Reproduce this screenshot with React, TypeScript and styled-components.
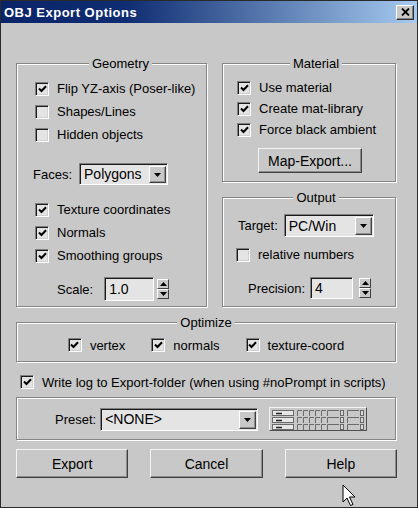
import React from 'react';
import styled, { createGlobalStyle } from 'styled-components';

const FACE = '#c8c8c8';
const FIELD = '#e4e4e4';

const GlobalStyle = createGlobalStyle`
  html, body {
    margin: 0;
    padding: 0;
    background: ${FACE};
  }
  body {
    font-family: 'Liberation Sans', Arial, sans-serif;
    font-size: 13px;
    color: #000;
  }
  * {
    box-sizing: border-box;
  }
`;

const Window = styled.div`
  position: relative;
  width: 418px;
  height: 508px;
  background: ${FACE};
  border: 1px solid #2a2a2a;
  overflow: hidden;
`;

const TitleBar = styled.div`
  height: 22px;
  display: flex;
  align-items: center;
  justify-content: space-between;
  padding: 0 3px 0 3px;
  background: linear-gradient(90deg, #0a246a 0%, #0f2d72 30%, #a6caf0 100%);
`;

const Title = styled.span`
  color: #fff;
  font-weight: bold;
  font-size: 13px;
  letter-spacing: 0.5px;
`;

const CloseButton = styled.span`
  width: 18px;
  height: 15px;
  display: flex;
  align-items: center;
  justify-content: center;
  background: ${FACE};
  border: 1px solid;
  border-color: #fff #303030 #303030 #fff;
  box-shadow: inset -1px -1px 0 #808080;
`;

const Body = styled.div`
  padding: 33px 20px 0 15px;
  display: flex;
  flex-direction: column;
`;

const Columns = styled.div`
  display: grid;
  grid-template-columns: 192px 175px;
  column-gap: 14px;
  align-items: stretch;
`;

const Side = styled.div`
  display: flex;
  flex-direction: column;
  gap: 7px;
`;

const Group = styled.fieldset<{ $pad: string; $top?: number; $grow?: boolean }>`
  margin: ${p => p.$top ?? 0}px 1px 1px 0;
  min-width: 0;
  padding: ${p => p.$pad};
  border: 1px solid #858585;
  box-shadow: 1px 1px 0 #fff, inset 1px 1px 0 #fff;
  flex: ${p => (p.$grow ? 1 : 'none')};
`;

const Legend = styled.legend`
  margin: 0 auto;
  padding: 0 3px;
  line-height: 15px;
  background: ${FACE};
`;

const Stack = styled.div`
  display: flex;
  flex-direction: column;
  align-items: flex-start;
`;

const CheckRow = styled.label<{ $h?: number; $top?: number; $left?: number }>`
  display: flex;
  align-items: center;
  gap: 8px;
  height: ${p => p.$h ?? 23}px;
  margin-top: ${p => p.$top ?? 0}px;
  margin-left: ${p => p.$left ?? 0}px;
  white-space: nowrap;
`;

const Box = styled.span`
  width: 14px;
  height: 14px;
  flex: none;
  display: flex;
  align-items: center;
  justify-content: center;
  background: ${FIELD};
  border: 1px solid;
  border-color: #808080 #fff #fff #808080;
  box-shadow: inset 1px 1px 0 #1a1a1a, inset -1px -1px 0 #d0d0d0;
`;

const FieldRow = styled.div<{ $top?: number; $left?: number; $gap?: number }>`
  display: flex;
  align-items: center;
  gap: ${p => p.$gap ?? 6}px;
  margin-top: ${p => p.$top ?? 0}px;
  margin-left: ${p => p.$left ?? 0}px;
  white-space: nowrap;
`;

const Sunken = styled.div<{ $w: number; $h: number }>`
  width: ${p => p.$w}px;
  height: ${p => p.$h}px;
  display: flex;
  align-items: stretch;
  background: ${FIELD};
  border: 1px solid;
  border-color: #808080 #fff #fff #808080;
  box-shadow: inset 1px 1px 0 #1a1a1a;
`;

const FieldText = styled.span`
  flex: 1;
  display: flex;
  align-items: center;
  padding-left: 4px;
  font-size: 14px;
`;

const DropButton = styled.span`
  width: 17px;
  margin: 2px 1px 1px 0;
  display: flex;
  align-items: center;
  justify-content: center;
  background: ${FACE};
  border: 1px solid;
  border-color: #fff #404040 #404040 #fff;
  box-shadow: inset -1px -1px 0 #909090;
`;

const SpinGroup = styled.div<{ $gap: number }>`
  display: flex;
  align-items: center;
  gap: ${p => p.$gap}px;
`;

const Spinner = styled.div`
  display: flex;
  flex-direction: column;
`;

const SpinButton = styled.span`
  width: 12px;
  height: 10px;
  display: flex;
  align-items: center;
  justify-content: center;
  background: ${FACE};
  border: 1px solid;
  border-color: #fff #404040 #404040 #fff;
`;

const PushButton = styled.button<{ $w?: number; $h: number; $top?: number; $left?: number }>`
  width: ${p => (p.$w ? `${p.$w}px` : '100%')};
  height: ${p => p.$h}px;
  margin-top: ${p => p.$top ?? 0}px;
  margin-left: ${p => p.$left ?? 0}px;
  padding: 0;
  font: inherit;
  font-size: 14px;
  color: #000;
  background: ${FACE};
  border: 1px solid;
  border-color: #f4f4f4 #404040 #404040 #f4f4f4;
  box-shadow: inset -1px -1px 0 #8c8c8c;
`;

const OptimizeRow = styled.div`
  display: flex;
  justify-content: center;
  gap: 26px;
`;

const Panel = styled.div`
  margin: 4px 1px 1px 0;
  padding: 9px 0 8px 38px;
  border: 1px solid #858585;
  box-shadow: 1px 1px 0 #fff, inset 1px 1px 0 #fff;
  display: flex;
  align-items: center;
`;

const IconButton = styled.div`
  width: 98px;
  height: 24px;
  margin-left: 11px;
  display: flex;
  align-items: center;
  justify-content: center;
  background: ${FACE};
  border: 1px solid;
  border-color: #f4f4f4 #505050 #505050 #f4f4f4;
`;

const ButtonBar = styled.div`
  display: grid;
  grid-template-columns: repeat(3, 1fr);
  column-gap: 22px;
  margin-top: 8px;
`;

const Cursor = styled.svg`
  position: absolute;
  left: 341px;
  top: 483px;
`;

const Arrow = ({ up }: { up?: boolean }) => (
  <svg width="7" height="4" viewBox="0 0 7 4">
    <path d={up ? 'M0 4 L3.5 0 L7 4 Z' : 'M0 0 L7 0 L3.5 4 Z'} fill="#000" />
  </svg>
);

const Check = ({ label, checked, h, top, left }: { label: string; checked?: boolean; h?: number; top?: number; left?: number }) => (
  <CheckRow $h={h} $top={top} $left={left}>
    <Box>
      {checked && (
        <svg width="9" height="8" viewBox="0 0 9 8">
          <path d="M1 3.5 L3.5 6 L8 1.2" stroke="#000" strokeWidth="2" fill="none" />
        </svg>
      )}
    </Box>
    <span>{label}</span>
  </CheckRow>
);

const Combo = ({ value, w, h }: { value: string; w: number; h: number }) => (
  <Sunken $w={w} $h={h}>
    <FieldText>{value}</FieldText>
    <DropButton>
      <Arrow />
    </DropButton>
  </Sunken>
);

const SpinField = ({ value, w, h, gap }: { value: string; w: number; h: number; gap: number }) => (
  <SpinGroup $gap={gap}>
    <Sunken $w={w} $h={h}>
      <FieldText>{value}</FieldText>
    </Sunken>
    <Spinner>
      <SpinButton>
        <Arrow up />
      </SpinButton>
      <SpinButton>
        <Arrow />
      </SpinButton>
    </Spinner>
  </SpinGroup>
);

const PresetIcon = () => {
  const rows = [2, 9, 16];
  return (
    <svg width="94" height="22" viewBox="0 0 94 22">
      {rows.map(y => (
        <g key={y} fill="none" stroke="#6a6a6a" strokeWidth="1">
          <rect x="1.5" y={y + 0.5} width="21" height="5" fill="#e6e6e6" />
          <path d={`M5 ${y + 3.5} H11`} stroke="#202020" strokeWidth="1.5" />
          {[26, 32, 38, 44, 50].map(x => (
            <path key={x} d={`M${x + 0.5} ${y + 6} V${y + 0.5} H${x + 5}`} />
          ))}
          <path d={`M56.5 ${y + 6} V${y + 0.5} H68`} />
          <rect x="69.5" y={y + 0.5} width="3" height="5" fill="#d8d8d8" />
          <path d={`M76.5 ${y + 6} V${y + 0.5} H88`} />
          <rect x="89.5" y={y + 0.5} width="3" height="5" fill="#d8d8d8" />
        </g>
      ))}
    </svg>
  );
};

export default function App() {
  return (
    <>
      <GlobalStyle />
      <Window>
        <TitleBar>
          <Title>OBJ Export Options</Title>
          <CloseButton>
            <svg width="9" height="8" viewBox="0 0 9 8">
              <path d="M1 0.5 L8 7.5 M8 0.5 L1 7.5" stroke="#000" strokeWidth="1.8" />
            </svg>
          </CloseButton>
        </TitleBar>
        <Body>
          <Columns>
            <Group $pad="6px 0 5px 18px">
              <Legend>Geometry</Legend>
              <Stack>
                <Check checked label="Flip YZ-axis (Poser-like)" />
                <Check label="Shapes/Lines" />
                <Check label="Hidden objects" />
                <FieldRow $top={17} $left={-2} $gap={7}>
                  <span>Faces:</span>
                  <Combo value="Polygons" w={89} h={22} />
                </FieldRow>
                <Check checked top={13} label="Texture coordinates" />
                <Check checked label="Normals" />
                <Check checked label="Smoothing groups" />
                <FieldRow $top={10} $left={22} $gap={11}>
                  <span>Scale:</span>
                  <SpinField value="1.0" w={50} h={24} gap={3} />
                </FieldRow>
              </Stack>
            </Group>
            <Side>
              <Group $pad="6px 0 8px 14px">
                <Legend>Material</Legend>
                <Stack>
                  <Check checked h={21} label="Use material" />
                  <Check checked h={21} label="Create mat-library" />
                  <Check checked h={21} label="Force black ambient" />
                  <PushButton $w={104} $h={25} $top={8} $left={21}>
                    Map-Export...
                  </PushButton>
                </Stack>
              </Group>
              <Group $grow $pad="9px 0 7px 14px">
                <Legend>Output</Legend>
                <Stack>
                  <FieldRow $left={1} $gap={6}>
                    <span>Target:</span>
                    <Combo value="PC/Win" w={90} h={23} />
                  </FieldRow>
                  <Check h={21} top={7} left={-1} label="relative numbers" />
                  <FieldRow $top={12} $left={11} $gap={5}>
                    <span>Precision:</span>
                    <SpinField value="4" w={43} h={22} gap={6} />
                  </FieldRow>
                </Stack>
              </Group>
            </Side>
          </Columns>
          <Group $top={7} $pad="4px 0 5px 0">
            <Legend>Optimize</Legend>
            <OptimizeRow>
              <Check checked h={22} label="vertex" />
              <Check checked h={22} label="normals" />
              <Check checked h={22} label="texture-coord" />
            </OptimizeRow>
          </Group>
          <Check checked h={22} top={8} left={4} label="Write log to Export-folder (when using #noPrompt in scripts)" />
          <Panel>
            <FieldRow $gap={4}>
              <span>Preset:</span>
              <Combo value="<NONE>" w={158} h={23} />
            </FieldRow>
            <IconButton>
              <PresetIcon />
            </IconButton>
          </Panel>
          <ButtonBar>
            <PushButton $h={29}>Export</PushButton>
            <PushButton $h={29}>Cancel</PushButton>
            <PushButton $h={29}>Help</PushButton>
          </ButtonBar>
        </Body>
        <Cursor width="16" height="24" viewBox="0 0 16 24">
          <path d="M1 1 L1 18 L5 14 L8.5 21.5 L11 20.5 L7.5 13 L13 13 Z" fill="#fff" stroke="#000" strokeWidth="1" />
        </Cursor>
      </Window>
    </>
  );
}
